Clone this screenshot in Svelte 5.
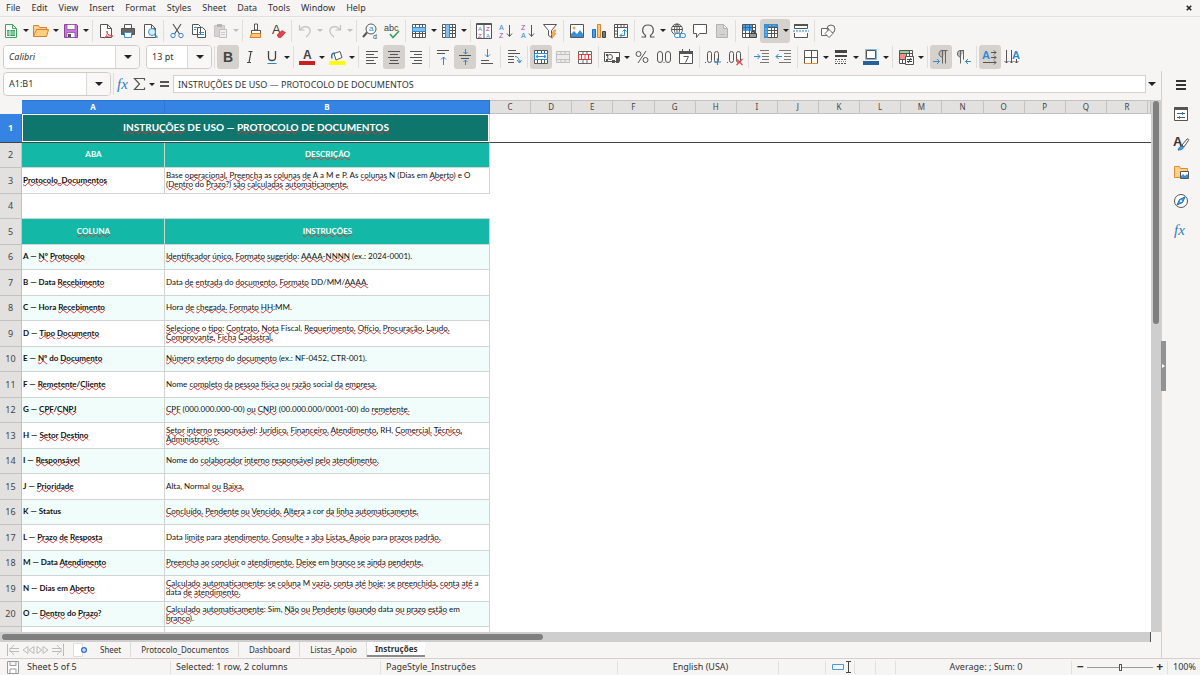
<script lang="ts">
  type Tool = { icon?: string; label?: string; caret?: boolean; active?: boolean; disabled?: boolean; sep?: boolean };
  type Row = { n: number; kind: string; a?: string; b?: string };

  const menus = ['File', 'Edit', 'View', 'Insert', 'Format', 'Styles', 'Sheet', 'Data', 'Tools', 'Window', 'Help'];
  const columns = 'CDEFGHIJKLMNOPQR'.split('');
  const sheets = ['Sheet', 'Protocolo_Documentos', 'Dashboard', 'Listas_Apoio', 'Instruções'];

  const sep: Tool = { sep: true };
  const t = (icon: string, label: string, extra: Partial<Tool> = {}): Tool => ({ icon, label, ...extra });
  const caret = { caret: true };
  const active = { active: true };

  const standardBar: Tool[] = [
    t('new', 'New', caret), t('open', 'Open', caret), t('save', 'Save', caret), sep,
    t('pdf', 'Export as PDF'), t('print', 'Print'), t('preview', 'Print preview'), sep,
    t('cut', 'Cut'), t('copy', 'Copy'), t('paste', 'Paste', { caret: true, disabled: true }), sep,
    t('clone', 'Clone formatting'), t('clear', 'Clear formatting'), sep,
    t('undo', 'Undo', { caret: true, disabled: true }), t('redo', 'Redo', { caret: true, disabled: true }), sep,
    t('find', 'Find and replace'), t('spell', 'Spelling'), sep,
    t('row', 'Row', caret), t('col', 'Column', caret), sep,
    t('sort', 'Sort'), t('asc', 'Sort ascending'), t('desc', 'Sort descending'), t('filter', 'AutoFilter'), sep,
    t('image', 'Insert image'), t('chart', 'Insert chart'), t('pivot', 'Pivot table'), sep,
    t('omega', 'Special character', caret), t('link', 'Hyperlink'), t('comment', 'Comment'), t('header', 'Headers and footers'), sep,
    t('area', 'Print area'), t('freeze', 'Freeze rows and columns', { caret: true, active: true }), t('split', 'Split window'), sep,
    t('draw', 'Draw functions')
  ];

  const formatBar: Tool[] = [
    sep, t('bold', 'Bold', active), t('italic', 'Italic'), t('underline', 'Underline', caret), sep,
    t('color', 'Font color', caret), t('fill', 'Background color', caret), sep,
    t('left', 'Align left'), t('center', 'Align center', active), t('right', 'Align right'), sep,
    t('top', 'Align top'), t('middle', 'Center vertically', active), t('bottom', 'Align bottom'), sep,
    t('wrap', 'Wrap text'), sep,
    t('merge', 'Merge and center', active), t('merge2', 'Merge cells', { disabled: true }), t('unmerge', 'Unmerge cells'), sep,
    t('money', 'Currency', caret), t('percent', 'Percent'), t('number', 'Number'), t('date', 'Date'), sep,
    t('decAdd', 'Add decimal place'), t('decDel', 'Delete decimal place'), sep,
    t('indent', 'Increase indent'), t('outdent', 'Decrease indent'), sep,
    t('borders', 'Borders', caret), t('bstyle', 'Border style', caret), t('bcolor', 'Border color', caret), sep,
    t('cond', 'Conditional', caret), sep,
    t('ltr', 'Left-to-right', active), t('rtl', 'Right-to-left'), sep,
    t('horiz', 'Text direction horizontal', active), t('vert', 'Text direction vertical')
  ];

  const rows: Row[] = [
    { n: 1, kind: 'title', a: 'INSTRUÇÕES DE USO — PROTOCOLO DE DOCUMENTOS' },
    { n: 2, kind: 'head', a: 'ABA', b: 'DESCRIÇÃO' },
    { n: 3, kind: 'plain', a: 'Protocolo_Documentos', b: 'Base operacional. Preencha as colunas de A a M e P. As colunas N (Dias em Aberto) e O\n(Dentro do Prazo?) são calculadas automaticamente.' },
    { n: 4, kind: 'empty' },
    { n: 5, kind: 'head', a: 'COLUNA', b: 'INSTRUÇÕES' },
    { n: 6, kind: 'tint', a: 'A — Nº Protocolo', b: 'Identificador único. Formato sugerido: AAAA-NNNN (ex.: 2024-0001).' },
    { n: 7, kind: 'plain', a: 'B — Data Recebimento', b: 'Data de entrada do documento. Formato DD/MM/AAAA.' },
    { n: 8, kind: 'tint', a: 'C — Hora Recebimento', b: 'Hora de chegada. Formato HH:MM.' },
    { n: 9, kind: 'plain', a: 'D — Tipo Documento', b: 'Selecione o tipo: Contrato, Nota Fiscal, Requerimento, Ofício, Procuração, Laudo,\nComprovante, Ficha Cadastral.' },
    { n: 10, kind: 'tint', a: 'E — Nº do Documento', b: 'Número externo do documento (ex.: NF-0452, CTR-001).' },
    { n: 11, kind: 'plain', a: 'F — Remetente/Cliente', b: 'Nome completo da pessoa física ou razão social da empresa.' },
    { n: 12, kind: 'tint', a: 'G — CPF/CNPJ', b: 'CPF (000.000.000-00) ou CNPJ (00.000.000/0001-00) do remetente.' },
    { n: 13, kind: 'plain', a: 'H — Setor Destino', b: 'Setor interno responsável: Jurídico, Financeiro, Atendimento, RH, Comercial, Técnico,\nAdministrativo.' },
    { n: 14, kind: 'tint', a: 'I — Responsável', b: 'Nome do colaborador interno responsável pelo atendimento.' },
    { n: 15, kind: 'plain', a: 'J — Prioridade', b: 'Alta, Normal ou Baixa.' },
    { n: 16, kind: 'tint', a: 'K — Status', b: 'Concluído, Pendente ou Vencido. Altera a cor da linha automaticamente.' },
    { n: 17, kind: 'plain', a: 'L — Prazo de Resposta', b: 'Data limite para atendimento. Consulte a aba Listas_Apoio para prazos padrão.' },
    { n: 18, kind: 'tint', a: 'M — Data Atendimento', b: 'Preencha ao concluir o atendimento. Deixe em branco se ainda pendente.' },
    { n: 19, kind: 'plain', a: 'N — Dias em Aberto', b: 'Calculado automaticamente: se coluna M vazia, conta até hoje; se preenchida, conta até a\ndata de atendimento.' },
    { n: 20, kind: 'tint', a: 'O — Dentro do Prazo?', b: 'Calculado automaticamente: Sim, Não ou Pendente (quando data ou prazo estão em\nbranco).' },
    { n: 21, kind: 'plain', a: '', b: '' }
  ];

  // words the English dictionary accepts; everything else gets the red wave
  const known = new Set('Base as As Dias em do Data data Hora Fiscal ex NF CTR Nome social RH Alta Normal cor para Status Sim MM DD DE USO ABA'.split(' '));

  function spell(text: string) {
    return text
      .split(/([\p{L}_º]+(?:-[\p{L}]+)?[.,]?)/u)
      .filter((s) => s)
      .map((s) => {
        const word = s.replace(/[.,]$/, '');
        return { s, bad: /^[\p{L}_º]/u.test(s) && word.length > 1 && !known.has(word) };
      });
  }

  const lines = (list: number[][], color = '#555') =>
    `<path stroke="${color}" d="${list.map(([x, y, w]) => `M${x} ${y}h${w}`).join('')}"/>`;
  const grid = '<path fill="#fff" stroke="#555" d="M1.5 1.5h13v13h-13zM1.5 4.5h13M1.5 7.5h13M1.5 10.5h13M4.5 1.5v13M8.5 1.5v13M11.5 1.5v13"/>';
  const page = '<path fill="#fff" stroke="#555" d="M2.5 1.5h7l4 4v9h-11zM9.5 1.5v4h4"/>';
  const txt = (x: number, y: number, size: number, s: string, fill = '#444', more = '') =>
    `<text x="${x}" y="${y}" font-size="${size}" fill="${fill}" font-family="Liberation Sans, sans-serif" ${more}>${s}</text>`;
  const blue = '#2f8ad6';
  const purple = '#a347ba';

  const icons: Record<string, string> = {
    new: '<path fill="#fff" stroke="#43a35c" d="M2.5 1.5h7l4 4v9h-11zM9.5 1.5v4h4"/><path fill="#37a45c" d="M4 7h8v6H4z"/><path stroke="#fff" stroke-width=".7" d="M4 9h8M4 11h8M7 7v6"/>',
    open: '<path fill="#fbd38c" stroke="#d9822b" d="M.5 13.5v-11h5l1 2h7v2"/><path fill="#fccf7e" stroke="#d9822b" d="M.5 13.5l3-7h12l-2 7z"/>',
    save: '<path fill="#c27bd0" stroke="#8e3fa0" d="M1.5 1.5h12l1 1v12h-13z"/><path fill="#fff" stroke="#8e3fa0" stroke-width=".7" d="M4 1.5h8v5H4zM4 9.5h8v5H4z"/><path fill="#555" d="M5 11h3v3H5z"/>',
    pdf: page + '<path d="M6 15c3-2 4-5 3-7-1 2 2 5 6 5-3-.5-6 0-9 2z" stroke="#e0434b"/>',
    print: '<path fill="#fff" stroke="#555" d="M4.5 5V1.500h7V5"/><path fill="#666" stroke="#555" d="M1.5 5.5h13v6h-13z"/><path fill="#fff" stroke="#3a8fd0" d="M4.5 9.5h7v5h-7z"/>',
    preview: page + '<circle cx="10" cy="9" r="3.5" fill="#d9effc" stroke="#3a8fd0"/><path stroke="#3a8fd0" stroke-width="1.5" d="M12.5 11.5l3 3"/>',
    cut: '<path stroke="#555" stroke-width="1.2" d="M4 1l6.500 10M12 1L5.500 11"/><circle cx="4" cy="12.5" r="2.2" stroke="#2f8ad6"/><circle cx="12" cy="12.5" r="2.2" stroke="#2f8ad6"/>',
    copy: '<path fill="#fff" stroke="#555" d="M1.5 1.5h6l2 2v8h-8zM6.5 4.5h5l3 3v7h-8z"/><path stroke="#3a8fd0" d="M3 4.5h3M3 6.5h2M8 9.5h5M8 11.5h5"/>',
    paste: '<path fill="#c9c7c5" stroke="#b2b0ae" d="M1.5 2.5h10v11h-10z"/><path fill="#999" d="M4 1h5v3H4z"/><path fill="#eee" stroke="#aaa" d="M6.5 6.5h7v8h-7z"/><path stroke="#bbb" d="M8 9.5h4M8 11.5h4"/>',
    clone: '<path fill="#fff" stroke="#555" d="M6.5 1h3v6h-3zM3.500 7.5h9v3h-9z"/><path fill="#fbc77b" stroke="#d9822b" d="M3.5 10.5h9v4h-10.5z"/>',
    clear: txt(2, 11, 13, 'A') + '<path fill="#e0434b" stroke="#b52d35" stroke-width=".6" d="M7 12l5-4.500 3.500 2L11 14.500H8.500z"/>',
    undo: '<path stroke="#aaa" stroke-width="1.2" d="M2.500 2v5h5M3 7c4-6 11-3 10 2-.5 2.500-3 4-4 5"/>',
    redo: '<path stroke="#aaa" stroke-width="1.2" d="M13.500 2v5h-5M13 7C9 1 2 4 3 9c.5 2.500 3 4 4 5"/>',
    find: '<circle cx="9" cy="6" r="5" fill="#fff" stroke="#555"/><path stroke="#555" stroke-width="2" d="M5 9.500L1 14"/>' + txt(7, 8, 8, 'a', blue) + txt(11, 16, 7, 'd'),
    spell: txt(0, 8, 9, 'abc') + '<path stroke="#30a25a" stroke-width="1.5" d="M6 11l3 3.500 6-6.500"/>',
    row: grid + '<path fill="#83bff0" stroke="#2f8ad6" d="M1.5 4.5h13v4h-13z"/>',
    col: grid + '<path fill="#83bff0" stroke="#2f8ad6" d="M4.5 1.5h4v13h-4z"/>',
    sort: '<path fill="#fff" stroke="#555" d="M.5 .5h15v15H.5zM.5 1.5h15M8 2v13"/>' + txt(2, 8, 6, 'A', blue) + txt(2, 15, 6, 'Z', purple) + txt(10, 8, 6, 'Z', purple) + txt(10, 15, 6, 'A', blue),
    asc: txt(1, 7, 7, 'A', blue) + txt(1, 15, 7, 'Z', purple) + '<path stroke="#555" d="M11.5 2v11M9 10.500l2.500 3 2.500-3"/>',
    desc: txt(1, 7, 7, 'Z', purple) + txt(1, 15, 7, 'A', blue) + '<path stroke="#555" d="M11.5 2v11M9 10.500l2.500 3 2.500-3"/>',
    filter: '<path fill="#fff" stroke="#555" d="M1.5 1.5h13l-5 6v7l-3-2v-5z"/><path fill="#fbb45c" stroke="#d9822b" stroke-width=".6" d="M12 7l-3 5h2l-1 3.500 4-5h-2l2-3.500z"/>',
    image: '<path fill="#fff" stroke="#555" d="M1.5 1.5h13v13h-13z"/><circle cx="5" cy="5" r="1.5" fill="#f5a547"/><path fill="#3a8fd0" d="M2 14v-3l3-3 3 3 3-4 3 4v3z"/>',
    chart: '<path fill="#4da0e4" stroke="#1e6fb5" d="M1.5 6.5h3v8h-3z"/><path fill="#fbc77b" stroke="#d9822b" d="M6.5 1.5h3v13h-3z"/><path fill="#777" stroke="#444" d="M11.5 8.5h3v6h-3z"/>',
    pivot: '<path fill="#fff" stroke="#555" d="M1.5 1.5h13v13h-13zM1.5 4.5h13M4.5 1.5v13M8 1.5v3M11 1.5v3M1.5 8h3M1.5 11h3"/><path stroke="#2f8ad6" d="M7 12.5h4.500V7M9 10.500l-2 2 2 2M9.500 8.500l2-2 2 2"/>',
    omega: '<path stroke="#555" stroke-width="1.2" d="M1.5 14h4v-1.500C1 9 2 2 8 2s7 7 2.500 10.500V14h4"/>',
    link: '<circle cx="7" cy="6.5" r="5.5" fill="#fff" stroke="#555"/><path stroke="#555" d="M1.5 6.5h11M7 1v11M3 3.500h8"/><ellipse cx="7" cy="6.5" rx="2.5" ry="5.5" stroke="#555"/><rect x="4.5" y="10.5" width="6" height="4" rx="2" fill="#fff" stroke="#2f8ad6"/><rect x="9.5" y="10.5" width="6" height="4" rx="2" stroke="#2f8ad6"/>',
    comment: '<path fill="#fff" stroke="#555" d="M1.5 1.5h13v9h-7l-3 4v-4h-3z"/>',
    header: '<path fill="#d5d3d1" stroke="#b5b3b1" d="M2.5 1.5h7l4 4v9h-11zM9.5 1.5v4h4"/><path stroke="#bbb" d="M5 11.5h6"/>',
    area: grid + '<path fill="#4da0e4" d="M2 2h9v6H2z"/><path stroke="#1e6fb5" d="M2 4.5h9M4.500 2v6M8.500 2v6"/><path fill="#999" stroke="#444" d="M8.5 10.5h7v4h-7zM10.500 8.5h3v2h-3z"/>',
    freeze: grid + '<path fill="#3a8fd0" d="M1 1h14v3H1zM1 1h4v14H1z"/><path stroke="#cfe6fa" stroke-width=".7" d="M2 6h2M2 9h2M2 12h2M7 2v1M11 2v1"/>',
    split: '<path fill="#fff" stroke="#555" d="M1.5 5.500v-4h13v4zM1.5 10v4.500h13V10"/><path fill="#555" d="M1 1h14v2H1z"/><path stroke="#2f8ad6" stroke-dasharray="2 1" d="M0 8h16"/>',
    draw: '<path fill="#fff" stroke="#666" d="M1.5 5.5h7v7h-7z"/><circle cx="11" cy="6" r="4" stroke="#666"/><path fill="#fff" stroke="#666" d="M9 6.500l4 4-4 4-4-4z"/>',
    bold: txt(3, 13, 14, 'B', '#444', 'font-weight="700"'),
    italic: '<path stroke="#444" stroke-width="1.2" d="M6.500 2.500h4M5 13.500h4M9 2.500l-2 11"/>',
    underline: '<path stroke="#444" stroke-width="1.3" d="M4.500 2v6.500c0 4 7 4 7 0V2"/><path stroke="#2f8ad6" d="M3.500 14.5h9"/>',
    color: txt(4, 10, 12, 'A', '#444', 'font-weight="700"') + '<path fill="#c9211e" d="M0 12h16v4H0z"/>',
    fill: '<path fill="#fff" stroke="#555" d="M5 4.500l6-2 2 6-6 2.500z"/><path stroke="#2f6fa5" stroke-width="1.5" d="M6 4.500c-3-1-4 2-3 5"/><path fill="#ffff00" d="M0 12h16v4H0z"/>',
    left: lines([[2, 2.5, 12], [2, 5.5, 8], [2, 8.5, 12], [2, 11.5, 8], [2, 14.5, 10]]),
    center: lines([[2, 2.5, 12], [4, 5.5, 8], [2, 8.5, 12], [4, 11.5, 8], [3, 14.5, 10]]),
    right: lines([[2, 2.5, 12], [6, 5.5, 8], [2, 8.5, 12], [6, 11.5, 8], [4, 14.5, 10]]),
    top: lines([[2, 1.5, 12], [2, 4.5, 8]]) + '<path stroke="#2f8ad6" d="M8.5 16V8M6 10.500L8.500 8l2.500 2.500"/>',
    middle: lines([[2, 6.5, 12], [4, 9.5, 8]]) + '<path stroke="#2f8ad6" d="M8.5 0v5M6.500 3l2 2 2-2M8.5 16v-5M6.500 13l2-2 2 2"/>',
    bottom: lines([[2, 11.5, 8], [2, 14.5, 12]]) + '<path stroke="#2f8ad6" d="M8.5 0v8M6 5.500L8.500 8 11 5.500"/>',
    wrap: lines([[2, 1.5, 8], [2, 4.5, 12], [2, 7.5, 6], [2, 10.5, 6], [2, 13.5, 6]]) + '<path stroke="#2f8ad6" d="M9 7.5c3 0 4 2 4.500 6M11 11l2.500 3 2-3"/>',
    merge: grid + '<path fill="#fff" stroke="#2f8ad6" d="M1.5 4.5h13v6h-13z"/><path stroke="#2f8ad6" d="M3 7.5h10M5 6L3 7.500 5 9M11 6l2 1.500L11 9"/>',
    merge2: '<path fill="#e9e8e6" stroke="#aaa" d="M1.5 2.5h13v11h-13zM1.5 5.5h13M1.5 10.5h13M6 2.5v3M10 2.5v3M6 10.5v3M10 10.5v3"/>',
    unmerge: '<path fill="#fff" stroke="#666" d="M1.5 2.5h13v12h-13zM6 2.5v12M10 2.5v12"/><path fill="#fff" stroke="#d8413f" d="M1.5 5.5h13v5h-13zM4.5 5.5v5M8 5.5v5M11.5 5.5v5"/>',
    money: '<path fill="#fff" stroke="#555" d="M.5 3.5h15v9H.5z"/><circle cx="6" cy="8" r="2.5" stroke="#555"/><path fill="#555" d="M2 5h2v2H2zM2 10h2v2H2zM8 11h3v3H8zM12 8h3v6h-3z"/>',
    percent: '<circle cx="4.5" cy="5" r="2.5" stroke="#555"/><circle cx="11.5" cy="11" r="2.5" stroke="#555"/><path stroke="#555" d="M12 2L4 14"/>',
    number: '<rect x="1.5" y="2.5" width="5" height="11" rx="2.5" stroke="#555"/><rect x="9.5" y="2.5" width="5" height="11" rx="2.5" stroke="#555"/><path fill="#555" d="M7.5 13h1v1h-1z"/>',
    date: '<path fill="#fff" stroke="#555" d="M1.5 2.5h13v12h-13z"/><path fill="#555" d="M1 2h14v3H1zM4 0h1v3H4zM11 0h1v3h-1z"/><path stroke="#555" d="M5.5 7.5h5l-3 6"/>',
    decAdd: '<path fill="#555" d="M0 13h1v1H0z"/><rect x="2.5" y="2.5" width="4" height="11" rx="2" stroke="#555"/><rect x="9.5" y="2.5" width="4" height="11" rx="2" stroke="#555"/><path stroke="#2f8ad6" stroke-width="1.2" d="M9 13h7M12.5 9.5V16"/>',
    decDel: '<path fill="#555" d="M0 13h1v1H0z"/><rect x="2.5" y="2.5" width="4" height="11" rx="2" stroke="#555"/><rect x="9.5" y="2.5" width="4" height="11" rx="2" stroke="#555"/><path stroke="#e0434b" stroke-width="1.2" d="M9.500 10l6 6M15.500 10l-6 6"/>',
    indent: lines([[6, 1.5, 9], [8, 4.5, 7], [8, 7.5, 7], [8, 10.5, 7], [6, 13.5, 9]], '#777') + '<path stroke="#2f8ad6" d="M0 7.5h6M3.500 5L6 7.500 3.500 10"/>',
    outdent: lines([[3, 1.5, 12], [8, 4.5, 7], [8, 7.5, 7], [8, 10.5, 7], [3, 13.5, 12]], '#777') + '<path stroke="#2f8ad6" d="M6 7.5H0M2.500 5L0 7.500 2.500 10"/>',
    borders: '<path fill="#fff" stroke="#555" d="M1.5 1.5h13v13h-13zM8.5 1.5v13M1.5 8.5h13"/><path stroke="#e58b2f" d="M1 14.5h14"/>',
    bstyle: '<path fill="#444" d="M2 1h12v3H2zM2 6h12v2H2z"/><path stroke="#555" stroke-dasharray="2 1" d="M2 10.5h12M2 14.5h12"/><path stroke="#888" stroke-dasharray="1 1" d="M2 12.5h12"/>',
    bcolor: '<path fill="#fff" stroke="#555" d="M3.5 1.5h9v8h-9z"/><path stroke="#8ab8dd" d="M2.5 .5h11v10h-11z"/><path fill="#2a6099" d="M0 12h16v4H0z"/>',
    cond: grid + '<path fill="#8ed19a" d="M2 2h9v2H2z"/><path fill="#f08f8c" d="M2 5h6v5H2z"/><path fill="#fff" stroke="#555" d="M7.5 7.5h8v8h-8z"/><path stroke="#444" d="M9 10.5h5M9 12.5h5M13 9l-3 5"/>',
    ltr: '<path fill="#bbb" stroke="#666" d="M9.5 8C5 8 5 1.500 9 1.500h5.500M9.5 1.5v13M12.5 1.5v13"/><path stroke="#2f8ad6" d="M0 12.5h6M4 10l2.500 2.500L4 15"/>',
    rtl: '<path fill="#bbb" stroke="#666" d="M5.5 8C1.500 8 1.500 1.500 5 1.500h4M5.5 1.5v13M8.5 1.5v9"/><path stroke="#2f8ad6" d="M16 12.5h-5M13 10l-2.500 2.500L13 15"/>',
    horiz: txt(0, 10, 11, 'A', blue, 'font-weight="700"') + '<path stroke="#555" d="M9 3.5h5M12 1.500l2 2-2 2M9 8.5h5M12 6.500l2 2-2 2M1 13.5h13M12 11.500l2 2-2 2"/>',
    vert: txt(8, 10, 11, 'A', blue, 'font-weight="700"') + '<path stroke="#555" d="M2.5 1v13M.5 12l2 2 2-2M7.500 1v13M5.500 12l2 2 2-2M12.500 10v4M10.500 12l2 2 2-2"/>',
    fx: '<text x="1" y="13" font-size="15" font-style="italic" fill="#2f7fc4" font-family="Liberation Serif, serif">fx</text>',
    sigma: '<path stroke="#555" stroke-width="1.2" d="M12.500 4.500v-2h-10l5 5.500-5 5.500h10v-2"/>',
    equal: '<path fill="#555" d="M4 5h9v2H4zM4 9h9v2H4z"/>',
    menu: '<path fill="#333" d="M3 3h10v2H3zM3 7h10v2H3zM3 11h10v2H3z"/>',
    props: '<path fill="#fff" stroke="#555" d="M1.5 1.5h13v13h-13z"/><path fill="#555" d="M1 1h14v3H1z"/><path stroke="#555" d="M4 7.5h8M4 11.5h8"/><path stroke="#2f8ad6" d="M9.5 6v3M6.5 10v3"/>',
    styles: txt(0, 11, 13, 'A', '#333', 'font-weight="700"') + '<path fill="#fff" stroke="#555" d="M9 10l5-6c2-.5 2 1 1 2l-4 6z"/><path fill="#4da0e4" stroke="#1e6fb5" d="M5 15c1-1 1-4 4-4 2 1 2 4-4 4z"/>',
    gallery: '<path fill="#fbd38c" stroke="#e58b2f" d="M1.5 13.500v-11h5l1 2h7v9z"/><path fill="#fff" stroke="#555" d="M7.5 7.5h8v7h-8z"/><path fill="#3a8fd0" d="M8 14v-2l2-2 2 2 2-2 1 1v3z"/>',
    navigator: '<circle cx="8" cy="8" r="6.5" fill="#fff" stroke="#555"/><path fill="#4da0e4" stroke="#1e6fb5" d="M12 4L9.500 9.500 4 12l2.500-5.500z"/><circle cx="8" cy="8" r="1" fill="#fff"/>',
    first: '<path stroke="#bbb" d="M2.5 2v12M9 3L4.500 8 9 13M4.500 6.500H14M4.500 9.500H14"/>',
    prev: '<path stroke="#bbb" d="M8 4.500v7L3 8zM14 4.500v7L9 8z"/>',
    next: '<path stroke="#bbb" d="M2 4.500v7L7 8zM8 4.500v7L13 8z"/>',
    last: '<path stroke="#bbb" d="M13.5 2v12M7 3l4.500 5L7 13M11.500 6.500H2M11.500 9.500H2"/>',
    addSheet: '<path fill="#fff" stroke="#ddd" d="M1.5 1.5h9v13h-9z"/><circle cx="12" cy="8" r="3" fill="#2f6fc4"/><path stroke="#fff" d="M10 8h4M12 6v4"/>',
    disk: '<path fill="#fff" stroke="#999" d="M2.5 2.5h11v12h-11zM5 2.5v4h6v-4M5 14v-4h6v4"/>'
  };

  const sidebar = [
    ['menu', 'Sidebar settings'], ['props', 'Properties'], ['styles', 'Styles'],
    ['gallery', 'Gallery'], ['navigator', 'Navigator'], ['fx', 'Functions']
  ];

  let formula = $state('INSTRUÇÕES DE USO — PROTOCOLO DE DOCUMENTOS');
  let cellRef = $state('A1:B1');
  let zoom = $state(100);
  let sheet = $state('Instruções');
</script>

{#snippet icon(name: string)}
  <svg viewBox="0 0 16 16" width="16" height="16" fill="none" aria-hidden="true">{@html icons[name]}</svg>
{/snippet}

{#snippet tools(list: Tool[])}
  {#each list as tool}
    {#if tool.sep}
      <span class="sep"></span>
    {:else}
      <span class="tool" class:active={tool.active} class:disabled={tool.disabled}>
        <button class="tool-btn" aria-label={tool.label} disabled={tool.disabled}>{@render icon(tool.icon ?? '')}</button>
        {#if tool.caret}
          <button class="caret" aria-label="{tool.label} options" disabled={tool.disabled}></button>
        {/if}
      </span>
    {/if}
  {/each}
{/snippet}

{#snippet words(text: string)}
  {#each spell(text) as part}{#if part.bad}<span class="bad">{part.s}</span>{:else}{part.s}{/if}{/each}
{/snippet}

<div class="window">
  <nav class="menubar">
    {#each menus as m}<button>{m}</button>{/each}
    <button class="close" aria-label="Close document">
      <svg viewBox="0 0 8 8" width="6" height="6"><path stroke="#222" stroke-width="2" d="M1 1l6 6M7 1L1 7" /></svg>
    </button>
  </nav>

  <div class="toolbar">{@render tools(standardBar)}</div>

  <div class="toolbar format">
    <label class="combo font-name">
      <select aria-label="Font name"><option>Calibri</option></select>
    </label>
    <label class="combo font-size">
      <select aria-label="Font size"><option>13 pt</option></select>
    </label>
    {@render tools(formatBar)}
  </div>

  <div class="body">
    <main>
      <div class="formula-bar">
        <div class="combo name-box">
          <input aria-label="Name box" bind:value={cellRef} />
          <button aria-label="Named ranges"></button>
        </div>
        <span class="sep"></span>
        <button class="small-btn" aria-label="Function wizard">{@render icon('fx')}</button>
        <button class="small-btn" aria-label="Select function">{@render icon('sigma')}</button>
        <button class="caret" aria-label="Function list"></button>
        <button class="small-btn" aria-label="Formula">{@render icon('equal')}</button>
        <input class="formula" aria-label="Formula input" bind:value={formula} />
        <button class="caret expand" aria-label="Expand formula bar"></button>
      </div>

      <div class="sheet">
        <div class="grid">
          <table>
            <colgroup>
              <col class="c-num" /><col class="c-a" /><col class="c-b" />
              {#each columns as c (c)}<col />{/each}
              <col class="c-end" />
            </colgroup>
            <thead>
              <tr>
                <th class="corner"></th>
                <th class="sel">A</th>
                <th class="sel">B</th>
                {#each columns as c}<th>{c}</th>{/each}
                <th></th>
              </tr>
            </thead>
            <tbody>
              {#each rows as row (row.n)}
                <tr class={row.kind}>
                  <th scope="row" class:sel={row.n === 1}>{row.n}</th>
                  {#if row.kind === 'title'}
                    <td class="title-cell" colspan="2">{@render words(row.a ?? '')}</td>
                  {:else if row.kind === 'empty'}
                    <td colspan="2"></td>
                  {:else}
                    <td class="a">{@render words(row.a ?? '')}</td>
                    <td class="b">{@render words(row.b ?? '')}</td>
                  {/if}
                  <td class="rest" colspan="17"></td>
                </tr>
              {/each}
            </tbody>
          </table>
        </div>
        <div class="vscroll"><div class="thumb"></div></div>
      </div>

      <div class="hscroll"><div class="track"><div class="thumb"></div></div></div>

      <div class="tabs">
        <div class="tab-nav">
          <button aria-label="First sheet" disabled>{@render icon('first')}</button>
          <button aria-label="Previous sheet" disabled>{@render icon('prev')}</button>
          <button aria-label="Next sheet" disabled>{@render icon('next')}</button>
          <button aria-label="Last sheet" disabled>{@render icon('last')}</button>
        </div>
        <button class="add" aria-label="Add sheet">{@render icon('addSheet')}</button>
        {#each sheets as s}
          <button class="tab" class:current={s === sheet} onclick={() => (sheet = s)}>{s}</button>
        {/each}
      </div>
    </main>

    <aside>
      <div class="grip"></div>
      {#each sidebar as [name, label]}
        <button aria-label={label}>{@render icon(name)}</button>
      {/each}
    </aside>
  </div>

  <footer>
    <span class="state">{@render icon('disk')}Sheet 5 of 5</span>
    <span>Selected: 1 row, 2 columns</span>
    <span>PageStyle_Instruções</span>
    <span class="mid">English (USA)</span>
    <span></span>
    <span class="mode">
      <svg viewBox="0 0 22 14" width="22" height="14" fill="none" aria-hidden="true">
        <path stroke="#4a9ad4" d="M1.5 4.5h11v5h-11z" /><path stroke="#444" d="M15 1.5h5M15 12.5h5M17.5 2v10" />
      </svg>
    </span>
    <span></span>
    <span></span>
    <span class="mid">Average: ; Sum: 0</span>
    <span class="zoom">
      <button aria-label="Zoom out">−</button>
      <input type="range" aria-label="Zoom" min="0" max="200" bind:value={zoom} />
      <button aria-label="Zoom in">+</button>
    </span>
    <span>{zoom}%</span>
  </footer>
</div>

<style>
  :global(body) {
    margin: 0;
    overflow: hidden;
  }

  .window {
    display: flex;
    flex-direction: column;
    height: 100vh;
    background: #f6f5f4;
    color: #333;
    font: 9px/12px 'Noto Sans', sans-serif;
  }

  button,
  input,
  select {
    margin: 0;
    padding: 0;
    border: 0;
    background: none;
    color: inherit;
    font: inherit;
  }

  svg {
    display: block;
    overflow: visible;
  }

  .menubar {
    display: flex;
    align-items: center;
    gap: 11px;
    height: 16px;
    padding: 0 8px 0 6px;
    border-bottom: 1px solid #e2e0de;
  }

  .menubar .close {
    margin-left: auto;
  }

  .toolbar {
    display: flex;
    align-items: center;
    height: 27px;
  }

  .tool {
    display: flex;
    align-items: center;
    height: 24px;
    border-radius: 3px;
  }

  .tool.active {
    background: #d5d1cd;
  }

  .tool.disabled {
    opacity: 0.7;
  }

  .tool-btn {
    display: grid;
    place-items: center;
    width: 22px;
    height: 24px;
  }

  .caret {
    display: grid;
    place-items: center;
    width: 8px;
    height: 20px;
  }

  .caret::after,
  .combo button::after,
  .combo:has(select)::after {
    content: '';
    border: 3px solid transparent;
    border-top: 3px solid #222;
    border-bottom: 0;
  }

  .disabled .caret::after {
    border-top-color: #aaa;
  }

  .sep {
    flex: none;
    width: 1px;
    height: 22px;
    margin: 0 2px;
    background: #e0dedb;
  }

  .format {
    box-sizing: border-box;
    padding: 0 0 1px 3px;
  }

  .combo {
    position: relative;
    display: flex;
    box-sizing: border-box;
    height: 24px;
    border: 1px solid #cfcbc7;
    border-radius: 4px;
    background: #fff;
    overflow: hidden;
  }

  .combo select {
    flex: 1;
    appearance: none;
    padding: 0 5px;
    background: linear-gradient(to left, #f8f7f6 23px, #dad7d4 23px, #dad7d4 24px, #fff 24px);
  }

  .combo:has(select)::after {
    position: absolute;
    right: 7px;
    top: 9px;
    border-width: 4px 4px 0;
    pointer-events: none;
  }

  .combo button {
    display: grid;
    place-items: center;
    width: 24px;
    border-left: 1px solid #dad7d4;
    background: #f8f7f6;
  }

  .combo button::after {
    border-width: 4px 4px 0;
  }

  .font-name {
    width: 137px;
    margin-right: 6px;
    font-style: italic;
  }

  .font-size {
    width: 66px;
  }

  .body {
    display: flex;
    flex: 1;
    min-height: 0;
  }

  main {
    display: flex;
    flex-direction: column;
    flex: 1;
    min-width: 0;
  }

  .formula-bar {
    display: flex;
    align-items: center;
    height: 26px;
    padding: 0 5px 3px 3px;
  }

  .name-box {
    width: 108px;
  }

  .name-box input {
    flex: 1;
    min-width: 0;
    padding: 0 5px;
  }

  .small-btn {
    display: grid;
    place-items: center;
    width: 16px;
    height: 20px;
  }

  .formula {
    flex: 1;
    min-width: 0;
    height: 16px;
    margin: 0 2px 0 1px;
    padding: 0 4px;
    border: 1px solid #d3d0cd;
    background: #fff;
  }

  .expand::after {
    border-width: 4px 4px 0;
  }

  .sheet {
    display: flex;
    flex: 1;
    min-height: 0;
  }

  .grid {
    flex: 1;
    min-width: 0;
    overflow: hidden;
    background: #fff;
  }

  table {
    width: 100%;
    table-layout: fixed;
    border-collapse: separate;
    border-spacing: 0;
  }

  .c-num {
    width: 22px;
  }

  .c-a {
    width: 143px;
  }

  .c-b {
    width: 325px;
  }

  .c-end {
    width: 3px;
  }

  th {
    box-sizing: border-box;
    padding: 0;
    border: 0 solid #c4c2c0;
    border-width: 0 1px 1px 0;
    background: #e2e1df;
    color: #444;
    font-weight: 400;
  }

  thead th {
    height: 14px;
    border-top-width: 1px;
    font-size: 8px;
    line-height: 10px;
  }

  thead .corner {
    border-color: #f6f5f4;
    background: #f6f5f4;
  }

  th.sel {
    border-color: #2a76d2;
    background: #3584e4;
    color: #fff;
    font-weight: 700;
  }

  td {
    box-sizing: border-box;
    padding: 0 0 1px 1px;
    border: 0 solid #d0d5d4;
    border-width: 0 1px 1px 0;
    color: #111;
    font: 8px/9px Lato, sans-serif;
    white-space: pre-line;
  }

  tbody tr {
    height: 26px;
  }

  tbody tr:nth-child(even) {
    height: 25px;
  }

  tbody tr.title {
    height: 29px;
  }

  .title th,
  .title td {
    border-bottom: 1px solid #444;
  }

  .title .title-cell {
    padding-bottom: 2px;
    background: #0f766e;
    color: #fff;
    font-size: 10px;
    font-weight: 700;
    line-height: 14px;
    text-align: center;
    box-shadow: inset 0 0 0 1px #fff;
  }

  .head td {
    background: #14b8a6;
    color: #fff;
    font-weight: 700;
    text-align: center;
  }

  .tint td {
    background: #f0fdfa;
  }

  td.a {
    font-weight: 700;
  }

  .empty td {
    border-right: 0;
  }

  tbody tr td.rest {
    border-right: 0;
    background: #fff;
  }

  tbody tr:not(.title) td.rest {
    border-bottom: 0;
  }

  .bad {
    text-decoration: underline wavy #d33 1px;
    text-decoration-skip-ink: none;
    text-underline-offset: -1px;
  }

  .vscroll {
    width: 10px;
    background: #cecece;
  }

  .vscroll .thumb {
    width: 6px;
    height: 42%;
    margin: 1px 1px 1px 2px;
    border-radius: 3px;
    background: #7f7f7f;
  }

  .hscroll {
    padding-right: 10px;
  }

  .hscroll .track {
    display: flex;
    align-items: center;
    height: 10px;
    border-right: 1px solid #555;
    background: #cecece;
  }

  .hscroll .thumb {
    width: 47%;
    height: 6px;
    margin-left: 2px;
    border-radius: 3px;
    background: #7f7f7f;
  }

  .tabs {
    display: flex;
    height: 16px;
    padding-left: 5px;
    font-size: 8px;
  }

  .tab-nav {
    display: flex;
    align-items: center;
  }

  .tab-nav button {
    width: 15px;
  }

  .add {
    display: grid;
    place-items: center;
    width: 20px;
    margin-left: 5px;
  }

  .tab {
    box-sizing: border-box;
    height: 15px;
    padding: 0 9px 0 10px;
    border-right: 1px solid #dcdad8;
  }

  .tab.current {
    padding: 0 8px;
    border-right: 0;
    border-bottom: 2px solid #8a8a8a;
    background: #fff;
    font-weight: 700;
  }

  aside {
    position: relative;
    display: flex;
    flex-direction: column;
    gap: 9px;
    width: 38px;
    padding-top: 4px;
    border-left: 1px solid #d3d0cd;
    align-items: center;
  }

  aside button {
    display: grid;
    place-items: center;
    width: 20px;
    height: 20px;
  }

  .grip {
    position: absolute;
    left: -1px;
    top: 46%;
    display: grid;
    place-items: center;
    width: 5px;
    height: 50px;
    background: #929292;
  }

  .grip::after {
    content: '';
    border: 2px solid transparent;
    border-left: 3px solid #fff;
    border-right: 0;
  }

  footer {
    display: grid;
    grid-template-columns: 171fr 210fr 237fr 161fr 47fr 29fr 21fr 20fr 176fr 96px 32px;
    align-items: center;
    height: 16px;
    border-top: 1px solid #d3d0cd;
  }

  footer > span {
    display: flex;
    align-items: center;
    height: 13px;
    box-sizing: border-box;
    min-width: 0;
    padding-left: 5px;
    border-right: 1px solid #e2e0de;
    white-space: nowrap;
  }

  footer > span:last-child {
    border-right: 0;
  }

  footer .state {
    gap: 6px;
  }

  footer .mid {
    justify-content: center;
  }

  .zoom {
    gap: 3px;
  }

  footer > .zoom {
    padding-right: 4px;
  }

  .zoom button {
    font-size: 12px;
    font-weight: 700;
  }

  .zoom input {
    flex: 1;
    min-width: 0;
    height: 8px;
    appearance: none;
    background: linear-gradient(#999, #999) center / 100% 1px no-repeat;
  }

  .zoom input::-webkit-slider-thumb {
    appearance: none;
    box-sizing: border-box;
    width: 3px;
    height: 7px;
    border: 1px solid #555;
    background: #fff;
  }
</style>
